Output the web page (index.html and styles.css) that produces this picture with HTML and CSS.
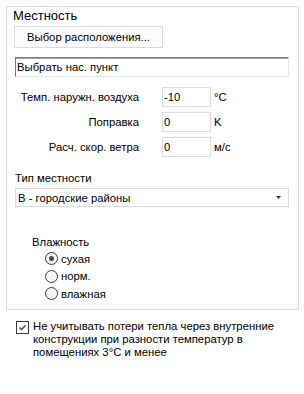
FILE: index.html
```html
<!DOCTYPE html>
<html lang="ru">
<head>
<meta charset="utf-8">
<link rel="stylesheet" href="styles.css">
</head>
<body>
<div class="group">
  <div class="title">Местность</div>
  <div class="btn">Выбор расположения...</div>
  <div class="place">Выбрать нас. пункт</div>
  <div class="rows">
    <div class="row"><span class="row-label">Темп. наружн. воздуха</span><span class="num">-10</span><span class="unit">°C</span></div>
    <div class="row"><span class="row-label">Поправка</span><span class="num">0</span><span class="unit">K</span></div>
    <div class="row"><span class="row-label">Расч. скор. ветра</span><span class="num">0</span><span class="unit">м/с</span></div>
  </div>
  <div class="type-label">Тип местности</div>
  <div class="select"><span>В - городские районы</span><svg class="arrow" width="5" height="3" viewBox="0 0 5 3"><path d="M0 0H5L2.5 3Z" fill="#333"/></svg></div>
  <div class="hum-label">Влажность</div>
  <div class="radios">
    <div class="radio-row"><span class="radio on"></span><span>сухая</span></div>
    <div class="radio-row"><span class="radio"></span><span>норм.</span></div>
    <div class="radio-row"><span class="radio"></span><span>влажная</span></div>
  </div>
</div>
<div class="check-row">
  <span class="checkbox"><svg width="11" height="11" viewBox="0 0 11 11"><path d="M2.5 5.5L4.5 7.5L8.5 3.5" fill="none" stroke="#555" stroke-width="1.6"/></svg></span>
  <span class="check-text">Не учитывать потери тепла через внутренние конструкции при разности температур в помещениях 3°С и менее</span>
</div>
</body>
</html>
```
FILE: styles.css
```css
body {
  margin: 0;
  font-family: "Liberation Sans", Arial, sans-serif;
  font-size: 11.3px;
  color: #000;
  background: #fff;
}
.group {
  box-sizing: border-box;
  margin: 6px 0 0 6px;
  width: 293px;
  height: 304px;
  border: 1px solid #dcdcdc;
  padding: 1px 0 0 6px;
}
.title {
  font-size: 13px;
  line-height: 16px;
  height: 16px;
}
.btn {
  box-sizing: border-box;
  margin: 2px 0 0 1px;
  width: 149px;
  height: 22px;
  border: 1px solid #dcdcdc;
  background: #fdfdfd;
  display: flex;
  align-items: center;
  justify-content: center;
}
.place {
  box-sizing: border-box;
  margin: 9px 0 0 2px;
  width: 274px;
  height: 20px;
  border: 1px solid;
  border-color: #7a7a7a #e3e9ef #e3e9ef #7a7a7a;
  box-shadow: inset 0 1px 0 #a8a8a8;
  padding-left: 1px;
  display: flex;
  align-items: center;
}
.rows {
  margin: 10px 0 0 2px;
  display: flex;
  flex-direction: column;
  gap: 5px;
}
.row {
  display: flex;
  align-items: center;
  height: 20px;
}
.row-label {
  width: 124px;
  text-align: right;
  white-space: nowrap;
}
.num {
  box-sizing: border-box;
  margin-left: 23px;
  width: 49px;
  height: 20px;
  border: 1px solid #dcdcdc;
  padding-left: 1px;
  display: flex;
  align-items: center;
}
.unit {
  margin-left: 3px;
}
.type-label {
  margin: 13px 0 0 2px;
  line-height: 16px;
}
.select {
  box-sizing: border-box;
  margin: 2px 0 0 2px;
  width: 274px;
  height: 19px;
  border: 1px solid #dcdcdc;
  padding: 0 7px 0 2px;
  display: flex;
  align-items: center;
  justify-content: space-between;
}
.hum-label {
  margin: 27px 0 0 19px;
  line-height: 16px;
}
.radios {
  margin-left: 32px;
}
.radio-row {
  display: flex;
  align-items: center;
  gap: 3px;
  height: 17.5px;
}
.radio {
  box-sizing: border-box;
  width: 13px;
  height: 13px;
  border: 1px solid #3c3c3c;
  border-radius: 50%;
  background: #f4f4f4;
  position: relative;
}
.radio.on::after {
  content: "";
  position: absolute;
  left: 3px;
  top: 3px;
  width: 5px;
  height: 5px;
  border-radius: 50%;
  background: #4a4a4a;
}
.check-row {
  margin: 10px 0 0 16px;
  display: flex;
  align-items: flex-start;
  gap: 4px;
}
.checkbox {
  box-sizing: border-box;
  flex: none;
  width: 13px;
  height: 13px;
  margin-top: 1px;
  border: 1px solid #3c3c3c;
  background: #fff;
  display: flex;
}
.check-text {
  line-height: 13px;
  width: 252px;
}
```
